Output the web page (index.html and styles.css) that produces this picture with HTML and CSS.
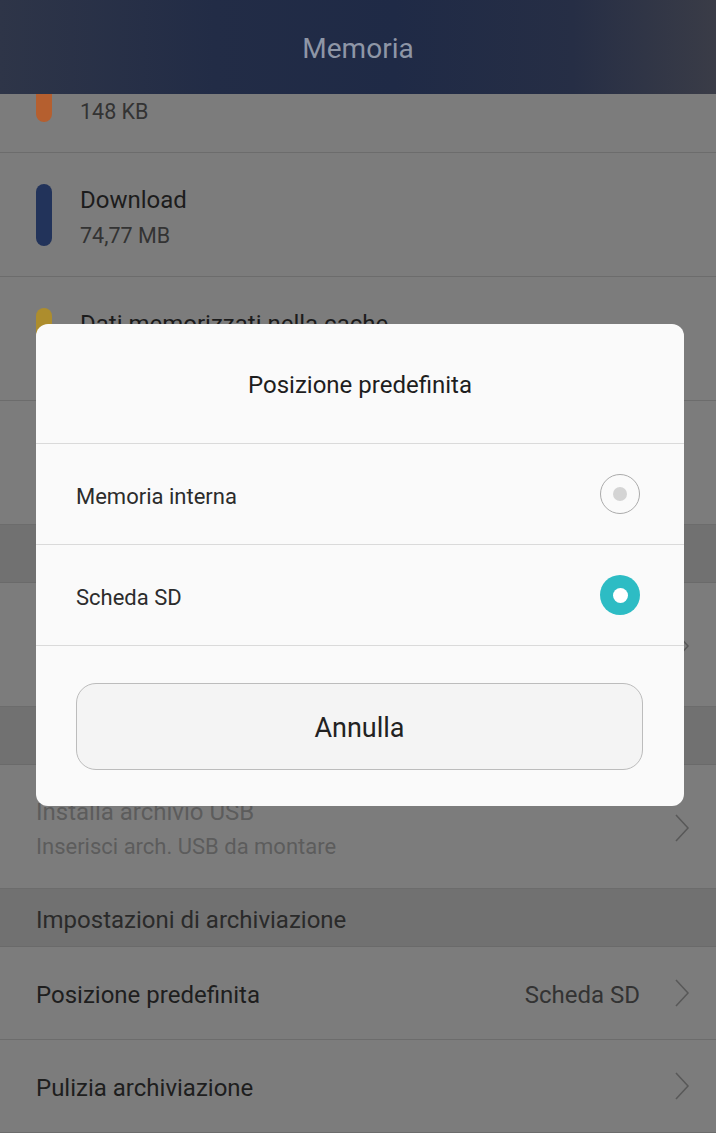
FILE: index.html
```html
<!DOCTYPE html>
<html lang="it">

<head>
    <meta charset="UTF-8">
    <meta name="viewport" content="width=device-width, initial-scale=1.0">
    <title>Memoria</title>
    <link rel="stylesheet" href="styles.css">
</head>

<body>
    <div class="screen">
        <header class="appbar">Memoria</header>

        <div class="list">
            <div class="row usage first">
                <span class="bar orange"></span>
                <div class="texts">
                    <div class="title"></div>
                    <div class="sub">148 KB</div>
                </div>
            </div>
            <div class="row usage">
                <span class="bar navy"></span>
                <div class="texts">
                    <div class="title">Download</div>
                    <div class="sub">74,77 MB</div>
                </div>
            </div>
            <div class="row usage">
                <span class="bar yellow"></span>
                <div class="texts">
                    <div class="title">Dati memorizzati nella cache</div>
                </div>
            </div>
            <!-- rows below are covered by the dialog -->
            <div class="row usage">
                <span class="bar grey"></span>
            </div>

            <div class="section"></div>
            <div class="row setting tall">
                <div class="texts"></div>
                <svg class="chev" viewBox="0 0 16 30"><polyline points="2,2 14,15 2,28" /></svg>
            </div>

            <div class="section"></div>
            <div class="row setting tall">
                <div class="texts">
                    <div class="title off">Installa archivio USB</div>
                    <div class="sub off">Inserisci arch. USB da montare</div>
                </div>
                <svg class="chev" viewBox="0 0 16 30"><polyline points="2,2 14,15 2,28" /></svg>
            </div>

            <div class="section">Impostazioni di archiviazione</div>
            <div class="row setting">
                <div class="texts">
                    <div class="title">Posizione predefinita</div>
                </div>
                <span class="value">Scheda SD</span>
                <svg class="chev" viewBox="0 0 16 30"><polyline points="2,2 14,15 2,28" /></svg>
            </div>
            <div class="row setting">
                <div class="texts">
                    <div class="title">Pulizia archiviazione</div>
                </div>
                <svg class="chev" viewBox="0 0 16 30"><polyline points="2,2 14,15 2,28" /></svg>
            </div>
        </div>

        <!-- dialog over the dimmed settings page -->
        <div class="dialog">
            <div class="dlg-title">Posizione predefinita</div>
            <div class="option">
                <span>Memoria interna</span>
                <span class="radio"></span>
            </div>
            <div class="option">
                <span>Scheda SD</span>
                <span class="radio checked"></span>
            </div>
            <div class="actions">
                <button class="cancel">Annulla</button>
            </div>
        </div>
    </div>
</body>

</html>
```

FILE: styles.css
```css
* {
    box-sizing: border-box;
}

body {
    margin: 0;
    background-color: #7c7c7c;
    font-family: Roboto, "Noto Sans", sans-serif;
}

.screen {
    position: relative;
    width: 716px;
    height: 1133px;
    overflow: hidden;
}

.appbar {
    position: relative;
    z-index: 2;
    height: 94px;
    display: flex;
    align-items: center;
    justify-content: center;
    padding-top: 3px;
    font-size: 28px;
    color: #8e96a6;
    background: linear-gradient(90deg, #2e3548 0%, #222c46 30%, #1f2a46 55%, #262e45 80%, #3a3c47 100%);
}

.list {
    overflow: hidden;
}

.row {
    display: flex;
    align-items: center;
    background-color: #7c7c7c;
    border-bottom: 1px solid #6c6c6c;
}

.row.usage {
    height: 124px;
    padding-left: 36px;
    align-items: flex-start;
}

.row.first {
    margin-top: -65px;
}

.bar {
    width: 16px;
    height: 62px;
    margin-top: 31px;
    border-radius: 8px;
    flex-shrink: 0;
}

.orange {
    background-color: #b55f2f;
}

.navy {
    background-color: #22335a;
}

.yellow {
    background-color: #ad8d2d;
}

.grey {
    background-color: #5f5f5f;
}

.usage .texts {
    margin-left: 28px;
    padding-top: 31px;
}

.usage .title {
    height: 32px;
    font-size: 24px;
    line-height: 32px;
    color: #1c1c1c;
}

.usage .sub {
    font-size: 21.5px;
    line-height: 30px;
    margin-top: 5px;
    color: #333333;
}

.section {
    height: 58px;
    display: flex;
    align-items: center;
    padding-left: 36px;
    padding-top: 4px;
    font-size: 24px;
    color: #2a2a2a;
    background-color: #717171;
    border-bottom: 1px solid #6a6a6a;
}

.row.setting {
    height: 93px;
    padding-left: 36px;
    padding-right: 26px;
    padding-top: 4px;
}

.row.tall {
    height: 124px;
    padding-top: 6px;
}

.setting .texts {
    flex: 1;
}

.setting .title {
    font-size: 24px;
    line-height: 30px;
    color: #1e1e1e;
}

.setting .sub {
    font-size: 22px;
    line-height: 30px;
    margin-top: 5px;
    color: #333333;
}

.setting .off {
    color: #5c5c5c;
}

.value {
    font-size: 24px;
    color: #333333;
    margin-right: 34px;
}

.chev {
    width: 16px;
    height: 30px;
    margin-top: -4px;
    fill: none;
    stroke: #585858;
    stroke-width: 1.5;
}

/* dialog */

.dialog {
    position: absolute;
    z-index: 3;
    left: 36px;
    top: 324px;
    width: 648px;
    height: 482px;
    background-color: #fafafa;
    border-radius: 12px;
    display: flex;
    flex-direction: column;
}

.dlg-title {
    height: 120px;
    display: flex;
    align-items: center;
    justify-content: center;
    padding-top: 3px;
    font-size: 24px;
    color: #1e1e1e;
    border-bottom: 1px solid #dadada;
}

.option {
    height: 101px;
    display: flex;
    align-items: center;
    justify-content: space-between;
    padding-left: 40px;
    padding-right: 44px;
    font-size: 22px;
    color: #2c2c2c;
    border-bottom: 1px solid #dadada;
}

.option span:first-child {
    padding-top: 4px;
}

.radio {
    width: 40px;
    height: 40px;
    border-radius: 50%;
    border: 1px solid #ababab;
    display: flex;
    align-items: center;
    justify-content: center;
}

.radio::after {
    content: "";
    width: 14px;
    height: 14px;
    border-radius: 50%;
    background-color: #d4d4d4;
}

.radio.checked {
    border: none;
    background-color: #2dbcc4;
}

.radio.checked::after {
    width: 15px;
    height: 15px;
    background-color: #ffffff;
}

.actions {
    flex: 1;
    padding: 37px 41px 0 40px;
}

.cancel {
    width: 100%;
    height: 87px;
    padding-top: 4px;
    border: 1px solid #bcbcbc;
    border-radius: 20px;
    background-color: #f4f4f4;
    font-family: Roboto, "Noto Sans", sans-serif;
    font-size: 27px;
    color: #222222;
}
```
